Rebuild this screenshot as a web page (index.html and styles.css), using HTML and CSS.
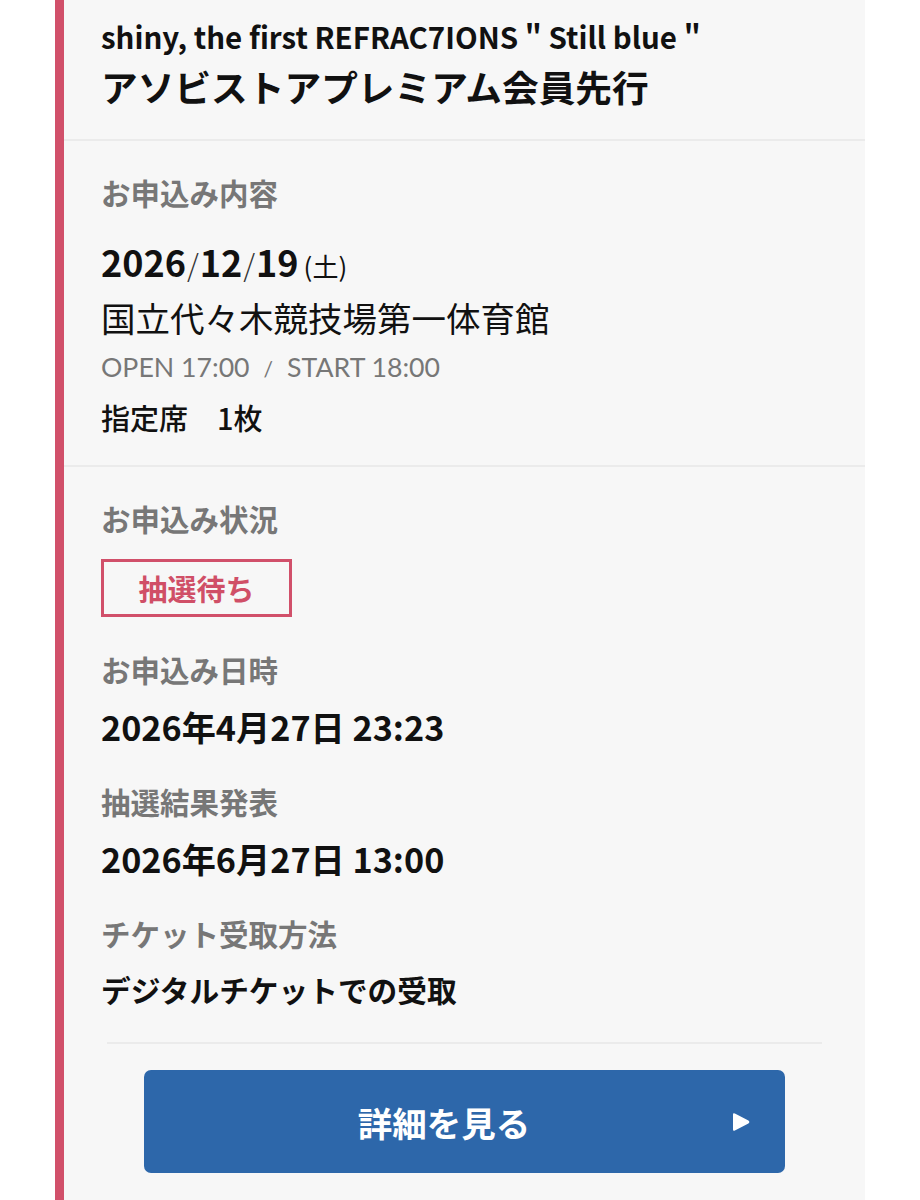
FILE: index.html
```html
<!DOCTYPE html>
<html lang="ja">
<head>
<meta charset="utf-8">
<title>お申込み詳細</title>
<link rel="stylesheet" href="styles.css">
</head>
<body>
<div class="card">
  <div class="card-head">
    <div class="event-name">shiny, the first REFRAC7IONS " Still blue "</div>
    <div class="sale-name">アソビストアプレミアム会員先行</div>
  </div>
  <div class="section section-detail">
    <div class="label">お申込み内容</div>
    <div class="date"><span class="num">2026</span><span class="slash">/</span><span class="num">12</span><span class="slash">/</span><span class="num">19</span><span class="dow">(土)</span></div>
    <div class="venue">国立代々木競技場第一体育館</div>
    <div class="time">OPEN 17:00<span class="sep">/</span>START 18:00</div>
    <div class="seat">指定席　1枚</div>
  </div>
  <div class="section section-status">
    <div class="label">お申込み状況</div>
    <div class="badge">抽選待ち</div>
    <div class="label label-gap">お申込み日時</div>
    <div class="value">2026年4月27日 23:23</div>
    <div class="label label-gap">抽選結果発表</div>
    <div class="value">2026年6月27日 13:00</div>
    <div class="label label-gap">チケット受取方法</div>
    <div class="value value-text">デジタルチケットでの受取</div>
  </div>
  <div class="card-foot">
    <div class="foot-rule"></div>
    <a class="btn" href="#">
      <span class="btn-text">詳細を見る</span>
      <svg class="btn-icon" width="18" height="20" viewBox="0 0 18 20" aria-hidden="true">
        <path d="M1 2.6 Q1 0.6 2.9 1.6 L16.4 8.6 Q18.3 10 16.4 11.4 L2.9 18.4 Q1 19.4 1 17.4 Z" fill="#ffffff"/>
      </svg>
    </a>
  </div>
</div>
</body>
</html>
```

FILE: styles.css
```css
html, body {
  margin: 0;
  padding: 0;
  background: #ffffff;
}

body {
  font-family: "Noto Sans CJK JP", "Noto Sans", sans-serif;
  color: #111111;
}

.card {
  margin-left: 55px;
  width: 810px;
  min-height: 1200px;
  box-sizing: border-box;
  background: #f7f7f7;
  border-left: 9px solid #d1506a;
}

.card-head {
  padding: 16px 37px 29px;
  border-bottom: 2px solid #ebebeb;
}

.event-name {
  font-size: 29.5px;
  line-height: 40px;
  font-weight: 700;
}

.sale-name {
  margin-top: 6px;
  font-size: 36.7px;
  line-height: 48px;
  font-weight: 700;
}

.section {
  padding: 31px 37px 28px;
  border-bottom: 2px solid #ebebeb;
}

.section-status {
  border-bottom: none;
  padding-bottom: 0;
}

.label {
  font-size: 29.5px;
  line-height: 40px;
  font-weight: 700;
  color: #777777;
}

.label-gap {
  margin-top: 32px;
}

.date {
  margin-top: 24px;
  line-height: 50px;
  font-weight: 700;
}

.date .num {
  font-size: 36px;
}

.date .slash {
  font-size: 30px;
  font-weight: 300;
  color: #333333;
  margin: 0 1px;
}

.date .dow {
  font-size: 26px;
  font-weight: 400;
  margin-left: 5px;
}

.venue {
  margin-top: -1px;
  font-size: 34.5px;
  line-height: 46px;
}

.time {
  margin-top: 7px;
  font-family: "Lato", "Noto Sans", sans-serif;
  font-size: 26.7px;
  line-height: 40px;
  color: #777777;
}

.time .sep {
  margin: 0 14px;
  font-size: 21px;
}

.seat {
  margin-top: 8px;
  font-size: 29px;
  line-height: 40px;
  font-weight: 500;
}

.badge {
  margin-top: 21px;
  width: 191px;
  height: 58px;
  box-sizing: border-box;
  border: 3px solid #d1506a;
  font-size: 29px;
  line-height: 52px;
  font-weight: 700;
  color: #d04f67;
  text-align: center;
}

.value {
  margin-top: 14px;
  font-size: 34.2px;
  line-height: 46px;
  font-weight: 700;
}

.value-text {
  margin-top: 14px;
  font-size: 29.7px;
}

.card-foot {
  padding: 29px 43px 0;
}

.foot-rule {
  border-top: 2px solid #ebebeb;
}

.btn {
  position: relative;
  margin: 26px auto 0;
  width: 641px;
  height: 103px;
  box-sizing: border-box;
  padding-right: 41px;
  display: flex;
  align-items: center;
  justify-content: center;
  background: #2d67aa;
  border-radius: 7px;
  text-decoration: none;
}

.btn-text {
  font-size: 34.5px;
  font-weight: 700;
  color: #ffffff;
}

.btn-icon {
  position: absolute;
  right: 35px;
  top: 42px;
}
```
